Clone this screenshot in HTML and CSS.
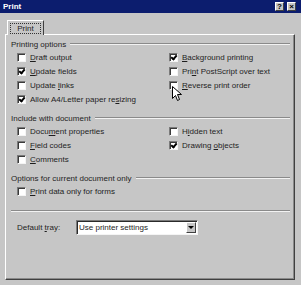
FILE: index.html
```html
<!DOCTYPE html>
<html lang="en">
<head>
    <meta charset="UTF-8">
    <title>Print</title>
    <link rel="stylesheet" href="styles.css">
</head>
<body>

<div class="window">
    <div class="titlebar">
        <span class="title">Print</span>
        <span class="title-buttons">
            <span class="tbtn">?</span>
            <span class="tbtn">&#215;</span>
        </span>
    </div>

    <div class="tabs">
        <div class="tab"><span class="tab-label">Print</span></div>
    </div>

    <div class="panel">
        <div class="group-title"><span>Printing options</span></div>
        <div class="grid">
            <div class="opt"><span class="box"></span><span><u>D</u>raft output</span></div>
            <div class="opt"><span class="box checked"></span><span><u>B</u>ackground printing</span></div>
            <div class="opt"><span class="box checked"></span><span><u>U</u>pdate fields</span></div>
            <div class="opt"><span class="box"></span><span>Pri<u>n</u>t PostScript over text</span></div>
            <div class="opt"><span class="box"></span><span>Update <u>l</u>inks</span></div>
            <div class="opt"><span class="box"></span><span><u>R</u>everse print order</span></div>
            <div class="opt"><span class="box checked"></span><span>Allow A4/Letter paper re<u>s</u>izing</span></div>
        </div>

        <div class="group-title spaced"><span>Include with document</span></div>
        <div class="grid">
            <div class="opt"><span class="box"></span><span>Docu<u>m</u>ent properties</span></div>
            <div class="opt"><span class="box"></span><span>H<u>i</u>dden text</span></div>
            <div class="opt"><span class="box"></span><span><u>F</u>ield codes</span></div>
            <div class="opt"><span class="box checked"></span><span>Drawing <u>o</u>bjects</span></div>
            <div class="opt"><span class="box"></span><span><u>C</u>omments</span></div>
        </div>

        <div class="group-title spaced"><span>Options for current document only</span></div>
        <div class="grid">
            <div class="opt"><span class="box"></span><span><u>P</u>rint data only for forms</span></div>
        </div>

        <div class="separator"></div>

        <div class="tray-row">
            <span class="tray-label">Default <u>t</u>ray:</span>
            <div class="select">
                <span class="select-text">Use printer settings</span>
                <span class="select-btn"><span class="arrow"></span></span>
            </div>
        </div>
    </div>

    <svg class="cursor" width="11" height="16" viewBox="0 0 11 16">
        <path d="M0.5 0.5 L0.5 12.5 L3.5 9.5 L5.5 14.5 L7.5 13.5 L5.5 8.5 L9.5 8.5 Z" fill="#fff" stroke="#000" stroke-width="1"/>
    </svg>
</div>

</body>
</html>
```

FILE: styles.css
```css
body {
    margin: 0;
    background-color: #c6c6c6;
    font-family: "Liberation Sans", Arial, sans-serif;
    font-size: 8px;
    color: #1e1e1e;
}
.window {
    position: relative;
    width: 301px;
    height: 285px;
    background-color: #c6c6c6;
    overflow: hidden;
}
.titlebar {
    height: 13px;
    background: #0c1d6e;
    display: flex;
    align-items: center;
    justify-content: space-between;
    padding: 0 5px 0 3px;
}
.title {
    color: white;
    font-weight: bold;
    font-size: 8px;
}
.title-buttons {
    display: flex;
    gap: 3px;
}
.tbtn {
    width: 9px;
    height: 9px;
    background: #c6c6c6;
    border-top: 1px solid #fff;
    border-left: 1px solid #fff;
    border-right: 1px solid #404040;
    border-bottom: 1px solid #404040;
    box-sizing: border-box;
    font-size: 8px;
    font-weight: bold;
    line-height: 7px;
    text-align: center;
    color: #000;
}
.tabs {
    padding: 7px 0 0 7px;
    height: 14px;
    display: flex;
}
.tab {
    width: 37px;
    height: 15px;
    box-sizing: border-box;
    border-top: 1px solid #fff;
    border-left: 1px solid #fff;
    border-right: 1px solid #404040;
    background: #c6c6c6;
    display: flex;
    align-items: center;
    justify-content: center;
    position: relative;
    z-index: 1;
}
.tab-label {
    border: 1px dotted #333;
    padding: 0 6px;
    line-height: 9px;
}
.panel {
    margin: 0 6px 0 5px;
    height: 246px;
    box-sizing: border-box;
    border-top: 1px solid #fff;
    border-left: 1px solid #fff;
    border-right: 1px solid #404040;
    border-bottom: 1px solid #404040;
    box-shadow: inset -1px -1px 0 #8a8a8a;
    padding: 3px 4px 0 5px;
}
.group-title {
    display: flex;
    align-items: center;
    height: 12px;
}
.group-title span {
    padding-right: 4px;
}
.group-title::after {
    content: "";
    flex: 1;
    height: 0;
    border-top: 1px solid #8a8a8a;
    border-bottom: 1px solid #f2f2f2;
}
.spaced {
    margin-top: 6px;
}
.grid {
    display: grid;
    grid-template-columns: 152px 1fr;
    padding-left: 6px;
}
.opt {
    height: 14px;
    display: flex;
    align-items: center;
    white-space: nowrap;
}
.box {
    width: 9px;
    height: 9px;
    box-sizing: border-box;
    background: #fff;
    border-top: 1px solid #7a7a7a;
    border-left: 1px solid #7a7a7a;
    border-right: 1px solid #f4f4f4;
    border-bottom: 1px solid #f4f4f4;
    box-shadow: inset 1px 1px 0 #3a3a3a;
    margin-right: 4px;
    flex-shrink: 0;
    position: relative;
}
.box.checked::after {
    content: "";
    position: absolute;
    left: 2px;
    top: 0px;
    width: 2px;
    height: 4px;
    border-right: 2px solid #000;
    border-bottom: 2px solid #000;
    transform: rotate(40deg);
}
.separator {
    margin-top: 12px;
    border-top: 1px solid #8a8a8a;
    border-bottom: 1px solid #f2f2f2;
}
.tray-row {
    display: flex;
    align-items: center;
    margin-top: 8px;
    padding-left: 6px;
    height: 15px;
}
.tray-label {
    width: 59px;
}
.select {
    width: 122px;
    height: 15px;
    box-sizing: border-box;
    background: #fff;
    border-top: 1px solid #7a7a7a;
    border-left: 1px solid #7a7a7a;
    border-right: 1px solid #f4f4f4;
    border-bottom: 1px solid #f4f4f4;
    box-shadow: inset 1px 1px 0 #2a2a2a;
    display: flex;
    align-items: center;
    justify-content: space-between;
    padding: 1px 1px 1px 2px;
}
.select-text {
    white-space: nowrap;
}
.select-btn {
    width: 10px;
    height: 11px;
    box-sizing: border-box;
    background: #c6c6c6;
    border-top: 1px solid #fff;
    border-left: 1px solid #fff;
    border-right: 1px solid #404040;
    border-bottom: 1px solid #404040;
    display: flex;
    align-items: center;
    justify-content: center;
}
.arrow {
    width: 0;
    height: 0;
    border-left: 3px solid transparent;
    border-right: 3px solid transparent;
    border-top: 3px solid #000;
}
.cursor {
    position: absolute;
    left: 172px;
    top: 86px;
}
```
